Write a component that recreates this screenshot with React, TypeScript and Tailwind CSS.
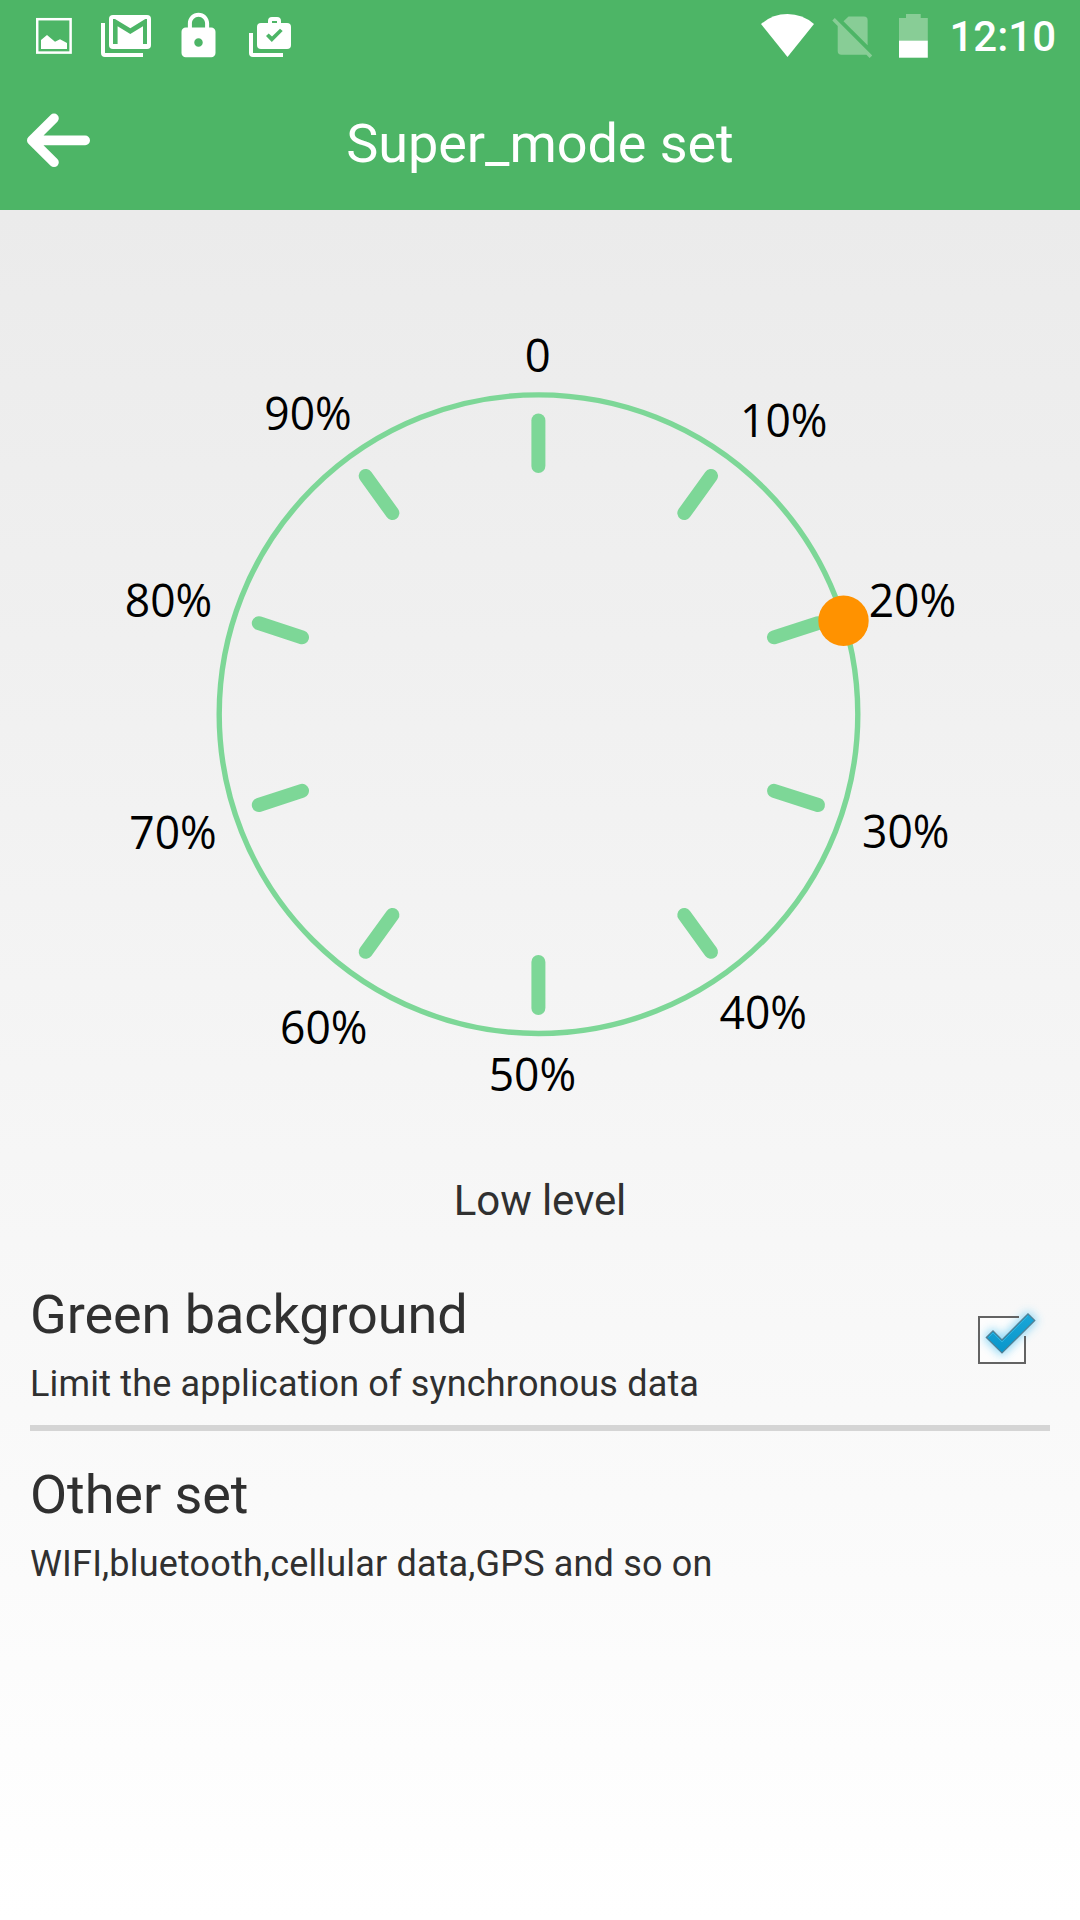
const INK = 'text-[#303030]';

type Tick = [number, number, number, number];

const ticks: Tick[] = [
  [538.4, 420.5, 538.4, 466],
  [711, 476, 684.3, 513],
  [818, 623.2, 774, 637.3],
  [818, 805, 774, 790.8],
  [711, 951.8, 684.3, 915],
  [538.4, 1008, 538.4, 962],
  [365.7, 951.8, 392.4, 915],
  [258.8, 805, 302, 790.8],
  [258.8, 623.2, 302, 637.3],
  [365.7, 476, 392.4, 513],
];

const labels: { text: string; x: number; y: number; w: number }[] = [
  { text: '0', x: 524.7, y: 371.7, w: 26 },
  { text: '10%', x: 740, y: 437.3, w: 87.5 },
  { text: '20%', x: 868.7, y: 617.3, w: 87.5 },
  { text: '30%', x: 862, y: 848, w: 87.5 },
  { text: '40%', x: 719.5, y: 1029, w: 87.5 },
  { text: '50%', x: 488.7, y: 1091, w: 87.5 },
  { text: '60%', x: 280, y: 1044, w: 87.5 },
  { text: '70%', x: 129.3, y: 849, w: 87.5 },
  { text: '80%', x: 124.8, y: 617.3, w: 87.5 },
  { text: '90%', x: 264.3, y: 430.3, w: 87.5 },
];

function StatusBar() {
  return (
    <div className="flex h-[72px] items-start justify-between">
      <div className="flex">
        <svg className="ml-9 h-[72px] w-9" viewBox="36 0 36 72">
          <rect x="37.2" y="19.2" width="33.4" height="33.4" fill="none" stroke="#fff" strokeWidth="2.5" />
          <path fill="#fff" d="M41 49V40L47 35L55 41.7L60 39.3L67 43V49Z" />
        </svg>
        <svg className="ml-[29px] h-[72px] w-[51px]" viewBox="101 0 51 72">
          <path fill="#fff" d="M101 23h4v30h38v4h-38q-4 0-4-4z" />
          <rect x="109" y="15" width="42" height="34" rx="4" fill="#fff" />
          <path fill="#4db566" d="M113 19h2l15.3 9.3L145.300 19H147v25h-4V26.300L130.300 34L117.600 26.300V44H113Z" />
        </svg>
        <svg className="ml-[20.500px] h-[72px] w-[51px]" viewBox="172.500 0 51 72">
          <g transform="translate(172.500 10.500) scale(2.125)">
            <path
              fill="#fff"
              d="M18 8h-1V6c0-2.760-2.240-5-5-5S7 3.240 7 6v2H6c-1.100 0-2 .9-2 2v10c0 1.100.9 2 2 2h12c1.100 0 2-.9 2-2V10c0-1.100-.9-2-2-2zm-6 9c-1.100 0-2-.9-2-2s.9-2 2-2 2 .9 2 2-.9 2-2 2zm3.100-9H8.900V6c0-1.710 1.390-3.100 3.100-3.100 1.710 0 3.100 1.390 3.100 3.100v2z"
            />
          </g>
        </svg>
        <svg className="ml-[25.500px] h-[72px] w-[43px]" viewBox="249 0 43 72">
          <path fill="#fff" d="M249 33h4v20h30v4h-30q-4 0-4-4z" />
          <rect x="257" y="23" width="34" height="26" rx="4" fill="#fff" />
          <path fill="#fff" fillRule="evenodd" d="M268 24V21q0-4 4-4h5q4 0 4 4v3zM272 21v2h5v-2z" />
          <path fill="#4db566" d="M266 36l2.700-2.400 3.300 3L280 28.700l2.700 2.400L271.800 42Z" />
        </svg>
      </div>
      <div className="flex">
        <svg className="h-[72px] w-[54px]" viewBox="761 0 54 72">
          <path fill="#fff" d="M787.500 57L761 24Q772.500 14 787.500 14T814 24Z" />
        </svg>
        <svg className="ml-[17px] h-[72px] w-10" viewBox="832 0 40 72" fill="#88cd96">
          <path d="M843.500 21.200L848.500 16.400H864q3.600 0 3.600 3.600v25.200Z" />
          <path d="M832.300 20.600l2.500-2.500L872.200 55.500l-2.600 2.500-3.200-3.200H841.500q-3.800 0-3.800-3.800V26Z" />
        </svg>
        <svg className="ml-[27px] h-[72px] w-[29px]" viewBox="899 0 29 72">
          <path fill="#88cd96" d="M899 18h7v-4h14.700v4h7.100v23H899z" />
          <path fill="#fff" d="M899 40.700h28.800v17H899z" />
        </svg>
        <div className="mr-6 flex h-[72px] w-[128px] justify-end text-[42px] leading-[74px] font-medium text-white">12:10</div>
      </div>
    </div>
  );
}

function TitleBar() {
  return (
    <div className="grid h-[138px] grid-cols-[120px_1fr_120px]">
      <svg className="h-[138px] w-[120px]" viewBox="0 72 120 138">
        <path
          d="M54 118.300L31.800 140.400L54 162.300M31.800 140.400H85.200M37 136v9"
          fill="none"
          stroke="#fff"
          strokeWidth="9.600"
          strokeLinecap="round"
          strokeLinejoin="round"
        />
      </svg>
      <h1 className="text-center text-[54px] leading-[144px] font-normal tracking-[-0.070px] text-white">Super_mode set</h1>
    </div>
  );
}

function Dial() {
  return (
    <svg className="block h-[930px] w-[1080px]" viewBox="0 210 1080 930">
      <circle cx="538.500" cy="714.200" r="319.300" fill="none" stroke="#7dd797" strokeWidth="5.400" />
      {ticks.map(([x1, y1, x2, y2]) => (
        <line key={`${x1}-${y1}`} x1={x1} y1={y1} x2={x2} y2={y2} stroke="#7dd797" strokeWidth="14" strokeLinecap="round" />
      ))}
      <circle cx="843.500" cy="620.700" r="25.200" fill="#ff9200" />
      {labels.map((l) => (
        <text
          key={l.text}
          x={l.x}
          y={l.y}
          textLength={l.w}
          lengthAdjust="spacingAndGlyphs"
          fill="#000"
          className="font-['Open_Sans','Noto_Sans',sans-serif] text-[45px]"
        >
          {l.text}
        </text>
      ))}
    </svg>
  );
}

function CheckBox() {
  return (
    <svg className="h-[96px] w-[96px]" viewBox="954 1292 96 96">
      <defs>
        <filter id="glow" x="-50%" y="-50%" width="200%" height="200%">
          <feGaussianBlur stdDeviation="5" />
        </filter>
        <linearGradient id="tick" x1="0" y1="0" x2="0" y2="1">
          <stop offset="0" stopColor="#1ba6d8" />
          <stop offset="1" stopColor="#0896cb" />
        </linearGradient>
      </defs>
      <path fill="#fdfdfd" d="M979 1317h46v46h-46z" />
      <path d="M986 1337.500L993 1330.500L1002 1339.500L1028 1313.500L1035 1320.500L1002 1353.500Z" fill="#7fd3f5" stroke="#7fd3f5" strokeWidth="4" opacity="0.900" filter="url(#glow)" />
      <path d="M1019 1317H979V1363H1025V1336" fill="none" stroke="#636363" strokeWidth="2" />
      <path
        d="M986.300 1337.500L993 1330.900L1002 1339.900L1028 1313.900L1034.800 1320.500L1002 1353Z"
        fill="url(#tick)"
        stroke="#557f92"
        strokeWidth="1.200"
      />
      <path d="M988.500 1337.500L993 1333L1002 1342L1028 1316" fill="none" stroke="#2fb2de" strokeWidth="1" />
    </svg>
  );
}

function Setting({ title, detail }: { title: string; detail: string }) {
  return (
    <div className={`flex flex-col ${INK}`}>
      <h2 className="h-[72px] text-[54px] leading-[70px] font-normal tracking-[-0.070px]">{title}</h2>
      <p className="h-[66px] text-[36px] leading-[64px] tracking-[0.170px]">{detail}</p>
    </div>
  );
}

export default function App() {
  return (
    <div className="flex h-[1920px] w-[1080px] flex-col overflow-hidden bg-white font-['Roboto',sans-serif]">
      <header className="h-[210px] bg-[#4db566]">
        <StatusBar />
        <TitleBar />
      </header>
      <main className="flex flex-1 flex-col bg-linear-to-b from-[#ebebeb] to-white">
        <Dial />
        <p className={`h-[140px] text-center text-[42px] leading-[122px] tracking-[-0.100px] ${INK}`}>Low level</p>
        <div className="mx-[30px] flex h-[151px] justify-between border-b-[6px] border-[#d5d5d5]">
          <Setting title="Green background" detail="Limit the application of synchronous data" />
          <div className="mt-3">
            <CheckBox />
          </div>
        </div>
        <div className="mx-[30px] mt-[29px]">
          <Setting title="Other set" detail="WIFI,bluetooth,cellular data,GPS and so on" />
        </div>
      </main>
    </div>
  );
}
